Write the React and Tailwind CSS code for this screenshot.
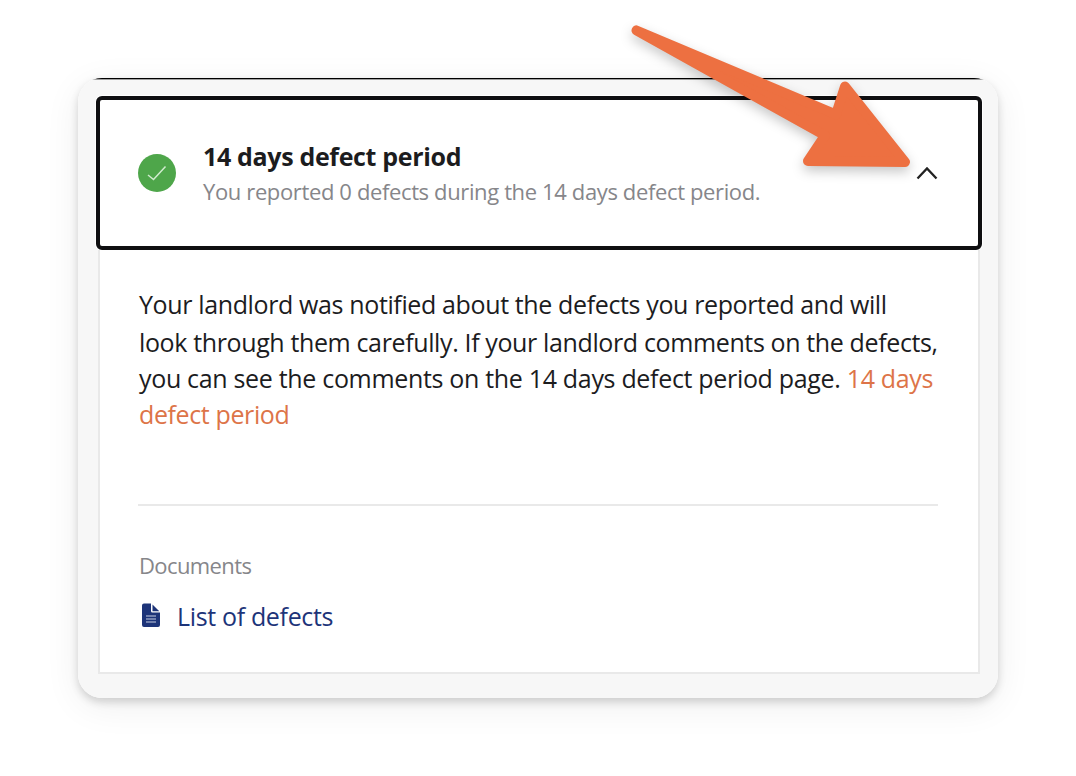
import React from 'react';

const CheckBadge = () => (
  <svg className="h-[38px] w-[38px] shrink-0" viewBox="0 0 38 38" fill="none">
    <circle cx="19" cy="19" r="19" fill="#4ea64a" />
    <path d="M10 21l5.500 4.500L27.500 12.500" stroke="#d0ebce" strokeWidth="1.5" />
  </svg>
);

const FileIcon = () => (
  <svg className="-mt-[4px] h-6 w-[18px] shrink-0" viewBox="0 0 18 24" fill="none">
    <path d="M2 .5h7v7.500a1.500 1.500 0 0 0 1.500 1.500H18v12.500a2 2 0 0 1-2 2H2a2 2 0 0 1-2-2v-19.500a2 2 0 0 1 2-2z" fill="#1d3479" />
    <path d="M10.500 1.500L17.300 8.300H10.500z" fill="#1d3479" />
    <path d="M4 13h10M4 16h10M4 19h10" stroke="#8e9bbf" strokeWidth="1.500" />
  </svg>
);

// Annotation arrow pointing at the collapse toggle
const Arrow = () => (
  <svg
    className="pointer-events-none absolute left-0 top-0 h-[776px] w-[1076px] drop-shadow-[0_5px_6px_rgba(0,0,0,0.22)]"
    viewBox="0 0 1076 776"
  >
    <path
      d="M636.500 30.500L836 114.500L845 86.500L905 162L808 161L825 135.500Z"
      fill="#ed7041"
      stroke="#ed7041"
      strokeWidth="10"
      strokeLinejoin="round"
    />
  </svg>
);

export default function App() {
  return (
    <div className="relative h-[776px] w-[1076px] overflow-hidden bg-white px-[78px] pt-[78px] font-['Open_Sans','Noto_Sans',sans-serif] text-[#1c1c1e]">
      <div className="h-[620px] rounded-[24px] shadow-[0_4px_8px_rgba(0,0,0,0.16),0_8px_36px_rgba(0,0,0,0.07)]">
        <div className="h-full overflow-hidden rounded-[24px] bg-[#f7f7f7] pl-[18px] pr-4">
          <div className="-ml-[18px] -mr-4 h-[2px] border-t border-black bg-[#a0a0a0]" />
          <div className="mt-4 flex h-[154px] items-center rounded-[6px] border-4 border-[#0f0f11] bg-white pl-[38px] pr-10 ring-1 ring-white">
            <CheckBadge />
            <div className="ml-[27px] flex-1 whitespace-nowrap">
              <h2 className="h-9 text-[25px] font-bold leading-[38px] tracking-[-0.34px]">14 days defect period</h2>
              <p className="text-[22px] leading-9 tracking-[-0.37px] text-[#86868a]">
                You reported 0 defects during the 14 days defect period.
              </p>
            </div>
            <svg className="h-[14px] w-[22px]" viewBox="0 0 22 14" fill="none">
              <path d="M1.500 12.500L11 2.500L20.500 12.500" stroke="#222" strokeWidth="2.300" />
            </svg>
          </div>

          <div className="mx-[2px] h-[424px] border-2 border-t-0 border-[#e9e9e9] bg-white px-[38px] pt-[35px]">
            <div className="whitespace-nowrap pl-px text-[25px]">
              <p className="h-[38px] leading-[38px] tracking-[-0.37px]">Your landlord was notified about the defects you reported and will</p>
              <p className="h-[37px] leading-[38px] tracking-[-0.37px]">look through them carefully. If your landlord comments on the defects,</p>
              <p className="h-9 leading-[36px] tracking-[-0.32px]">
                you can see the comments on the 14 days defect period page. <a className="text-[#dd7448]">14 days</a>
              </p>
              <p className="h-9 leading-[36px] tracking-[-0.38px] text-[#dd7448]">defect period</p>
            </div>
            <div className="mr-[2px] mt-[72px] h-[2px] bg-[#e9e9e9]" />
            <div className="mt-[41px] pl-px text-[22px] leading-9 tracking-[-0.6px] text-[#86868a]">Documents</div>
            <a className="mt-4 flex h-9 items-center pl-1 text-[25px] tracking-[-0.34px] text-[#1d3479]">
              <FileIcon />
              <span className="ml-[17px]">List of defects</span>
            </a>
          </div>
        </div>
      </div>
      <Arrow />
    </div>
  );
}
